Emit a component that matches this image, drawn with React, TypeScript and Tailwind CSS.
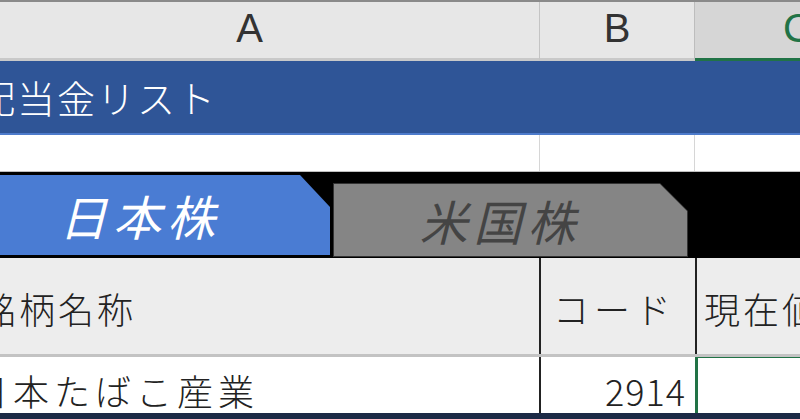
import React from "react";

const jp = "font-['Noto_Sans_CJK_JP','Noto_Sans_CJK_SC',sans-serif]";

export default function App() {
  return (
    <div className={`w-[800px] h-[419px] overflow-hidden bg-white ${jp}`}>
      {/* column letters */}
      <div className="flex h-[61px] border-t-2 border-[#8a8a8a] font-['Liberation_Sans',sans-serif] text-[40px] leading-none">
        <div className="shrink-0 -ml-[40px] w-[580px] flex items-center justify-center pb-1 bg-[#e7e7e7] border-r border-b-[3px] border-r-[#c4c4c4] border-b-[#c9c9c9] text-[#333]">
          A
        </div>
        <div className="shrink-0 w-[155px] flex items-center justify-center pb-1 bg-[#e7e7e7] border-r border-b-[3px] border-r-[#bdbdbd] border-b-[#c9c9c9] text-[#333]">
          B
        </div>
        <div className="flex-1 min-w-0 overflow-hidden flex items-center pl-[88px] pb-1 bg-[#d6d6d6] border-b-[3px] border-[#217346] text-[#217346]">
          C
        </div>
      </div>

      {/* title */}
      <div className="h-[74px] flex items-center bg-[#2f5597] border-b-2 border-[#4d7bcb]">
        <span className="-ml-[23px] text-[38px] leading-none font-light tracking-[2px] text-white whitespace-nowrap">
          配当金リスト
        </span>
      </div>

      {/* empty row */}
      <div className="flex h-[37px] border-b border-[#bfbfbf]">
        <div className="shrink-0 w-[540px] border-r border-[#d6d6d6]" />
        <div className="shrink-0 w-[155px] border-r border-[#d6d6d6]" />
        <div className="flex-1" />
      </div>

      {/* tabs */}
      <div className="flex h-[86px] bg-black pt-[3px]">
        <div className="shrink-0 w-[330px] h-[80px] bg-[#4a7cd3] [clip-path:polygon(0_0,300px_0,330px_32px,330px_100%,0_100%)] flex items-center justify-center pr-[50px]">
          <span className="text-[48px] leading-none italic text-white tracking-[6px]">日本株</span>
        </div>
        <div className="shrink-0 ml-[3px] mt-[8px] w-[355px] h-[74px] bg-[#333] [clip-path:polygon(0_0,327px_0,355px_28px,355px_100%,0_100%)] p-[1px]">
          <div className="w-full h-full bg-[#858585] [clip-path:polygon(0_0,326px_0,353px_27px,353px_100%,0_100%)] flex items-center justify-center pr-[20px]">
            <span className="text-[48px] leading-none italic text-[#444] tracking-[6px]">米国株</span>
          </div>
        </div>
      </div>

      {/* table header */}
      <div className="flex h-[99px] bg-[#ededed] border-b-[3px] border-[#c3c3c3] text-[36px] leading-none font-light text-[#222]">
        <div className="shrink-0 w-[541px] flex items-center pt-[4px] border-r-2 border-[#222]">
          <span className="-ml-[20px] tracking-[3px] whitespace-nowrap">銘柄名称</span>
        </div>
        <div className="shrink-0 w-[156px] flex items-center pt-[4px] pl-[12px] border-r-2 border-[#222]">
          <span className="tracking-[5px] whitespace-nowrap">コード</span>
        </div>
        <div className="flex-1 min-w-0 overflow-hidden flex items-center pt-[4px] pl-[7px]">
          <span className="tracking-[3px] whitespace-nowrap">現在値</span>
        </div>
      </div>

      {/* data row */}
      <div className="flex h-[56px] text-[36px] leading-none font-light text-[#222]">
        <div className="shrink-0 w-[541px] flex items-end pb-[5px] border-r-2 border-[#222]">
          <span className="-ml-[28px] tracking-[5px] whitespace-nowrap">日本たばこ産業</span>
        </div>
        <div className="shrink-0 w-[154px] flex items-end justify-end pb-[5px] pr-[9px]">
          <span className="tracking-[1px]">2914</span>
        </div>
        <div className="flex-1 min-w-0 border-l-[3px] border-t border-[#217346]" />
      </div>

      <div className="h-[6px] bg-[#1c2a46]" />
    </div>
  );
}
